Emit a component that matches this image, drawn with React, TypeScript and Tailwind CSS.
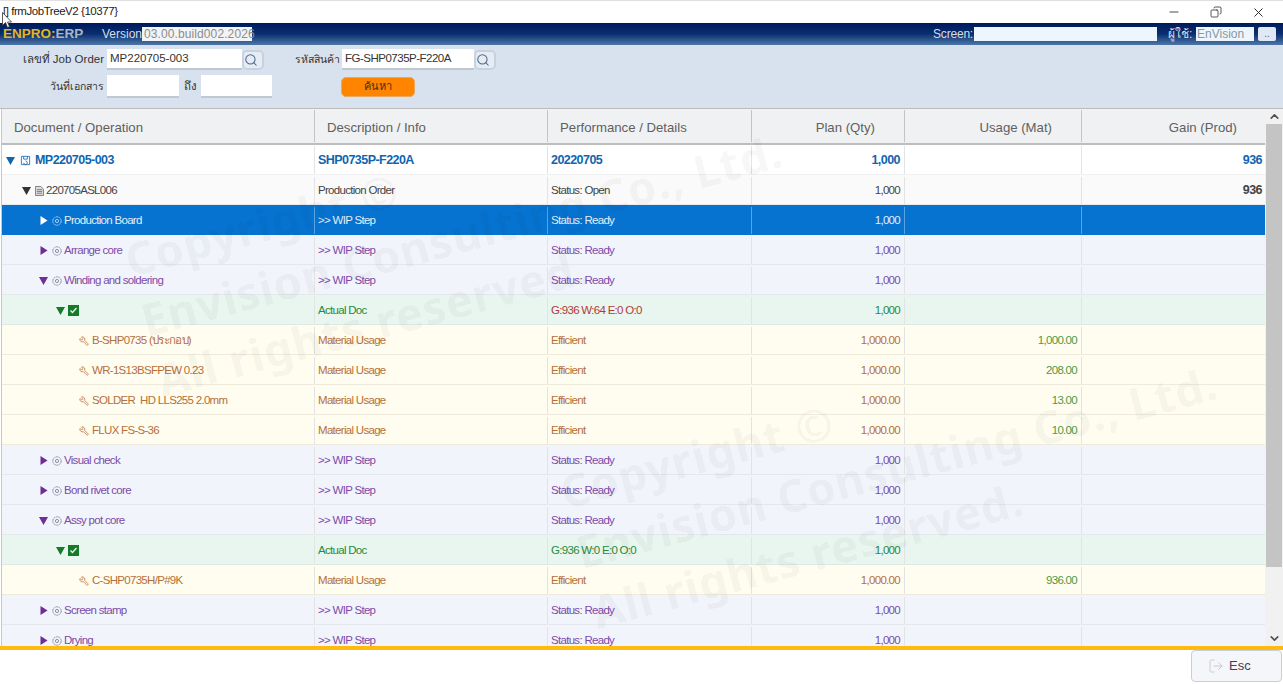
import { Copy, Minus, Search, Wrench, X, LogOut, ChevronUp, ChevronDown } from 'lucide-react'

const GRID = 'grid grid-cols-[313px_233px_204px_153px_177px_184px]'

type Kind = 'job' | 'order' | 'selected' | 'step' | 'doc' | 'material'

type Row = {
  kind: Kind
  name: string
  info: string
  detail: string
  plan: string
  usage?: string
  gain?: string
  open?: boolean
  detailRed?: boolean
}

const wip = (name: string, open = false): Row => ({
  kind: 'step',
  name,
  info: '>> WIP Step',
  detail: 'Status: Ready',
  plan: '1,000',
  open,
})

const mat = (name: string, usage: string): Row => ({
  kind: 'material',
  name,
  info: 'Material Usage',
  detail: 'Efficient',
  plan: '1,000.00',
  usage,
})

const ROWS: Row[] = [
  { kind: 'job', name: 'MP220705-003', info: 'SHP0735P-F220A', detail: '20220705', plan: '1,000', gain: '936', open: true },
  { kind: 'order', name: '220705ASL006', info: 'Production Order', detail: 'Status: Open', plan: '1,000', gain: '936', open: true },
  { ...wip('Production Board'), kind: 'selected' },
  wip('Arrange core'),
  wip('Winding and soldering', true),
  { kind: 'doc', name: '', info: 'Actual Doc', detail: 'G:936 W:64 E:0 O:0', plan: '1,000', open: true, detailRed: true },
  mat('B-SHP0735 (ประกอบ)', '1,000.00'),
  mat('WR-1S13BSFPEW 0.23', '208.00'),
  mat('SOLDER  HD LLS255 2.0mm', '13.00'),
  mat('FLUX FS-S-36', '10.00'),
  wip('Visual check'),
  wip('Bond rivet core'),
  wip('Assy pot core', true),
  { kind: 'doc', name: '', info: 'Actual Doc', detail: 'G:936 W:0 E:0 O:0', plan: '1,000', open: true },
  mat('C-SHP0735H/P#9K', '936.00'),
  wip('Screen stamp'),
  wip('Drying'),
]

const STYLES: Record<Kind, { row: string; text: string; indent: string; arrow: string; name: string; pad: string }> = {
  job: { row: 'bg-white border-[#f0f0f0]', text: 'text-[#0f66b0] font-bold', indent: 'pl-[4px] gap-[5px]', arrow: 'fill-[#0f66b0]', name: '-ml-[1px]', pad: 'pt-[1px]' },
  order: { row: 'bg-[#fafafa] border-[#ebebeb]', text: 'text-[#444444]', indent: 'pl-[20px] gap-[4px]', arrow: 'fill-[#333333]', name: '-ml-[2px]', pad: 'pt-[2px]' },
  selected: { row: 'bg-[#0673d0] border-[#0673d0]', text: 'text-[#e4effa]', indent: 'pl-[37px] gap-[4px]', arrow: 'fill-white', name: '-ml-[2px]', pad: 'pt-[2px]' },
  step: { row: 'bg-[#f1f4fb] border-[#e4e7ec]', text: 'text-[#7d4aa8]', indent: 'pl-[37px] gap-[4px]', arrow: 'fill-[#6b2f96]', name: '-ml-[2px]', pad: 'pt-[2px]' },
  doc: { row: 'bg-[#e8f6ef] border-[#dfe9e3]', text: 'text-[#268a3c]', indent: 'pl-[54px] gap-[3px]', arrow: 'fill-[#167a2c]', name: '', pad: 'pt-[2px]' },
  material: { row: 'bg-[#fffcf0] border-[#eeeadc]', text: 'text-[#b5703a]', indent: 'pl-[77px] gap-[4px]', arrow: '', name: '-ml-[1px]', pad: 'pt-[2px]' },
}

function Arrow({ open, className }: { open?: boolean; className: string }) {
  return (
    <svg width="9" height="9" viewBox="0 0 9 9" className={`shrink-0 ${className}`}>
      {open ? <path d="M0 1h9L4.5 9z" /> : <path d="M1.5 0l7 4.5-7 4.5z" />}
    </svg>
  )
}

function RowIcon({ kind }: { kind: Kind }) {
  if (kind === 'job') {
    return (
      <svg width="11" height="11" viewBox="0 0 12 12" fill="none" className="shrink-0 stroke-[#2a76b8]">
        <path d="M1.5 1.5h9v9h-9z" />
        <path d="M4 1.5v3h4v-3M6 6.5a2 2 0 1 1-2 2" />
      </svg>
    )
  }
  if (kind === 'order') {
    return (
      <svg width="9" height="10" viewBox="0 0 10 11" className="shrink-0">
        <path d="M.5.5h6l3 3v7h-9z" fill="#dddddd" stroke="#777777" />
        <path d="M2 4h6M2 6h6M2 8h6" stroke="#777777" />
      </svg>
    )
  }
  if (kind === 'doc') {
    return (
      <svg width="11" height="11" viewBox="0 0 11 11" className="shrink-0">
        <rect width="11" height="11" fill="#177a2a" />
        <path d="M2.500 5.500l2 2 4-4.500" fill="none" stroke="#e8f6ef" strokeWidth="1.3" />
      </svg>
    )
  }
  if (kind === 'material') {
    return <Wrench size={10} strokeWidth={2.4} className="shrink-0 -scale-x-100 text-[#c9926a]" />
  }
  return (
    <svg width="10" height="10" viewBox="0 0 10 10" fill="none" className="shrink-0">
      <circle cx="5" cy="5" r="4.2" stroke={kind === 'selected' ? '#a9cdf0' : '#8f8fa8'} strokeDasharray="2 .6" />
      <circle cx="5" cy="5" r="1.6" stroke={kind === 'selected' ? '#a9cdf0' : '#8f8fa8'} />
    </svg>
  )
}

function TreeRow({ row }: { row: Row }) {
  const s = STYLES[row.kind]
  const size = row.kind === 'job' ? 'text-[12.5px] tracking-[-0.55px]' : 'text-[11.5px] tracking-[-0.7px]'
  const divider = row.kind === 'selected' ? 'border-r border-[#5aa2e0]' : 'border-r border-[#e3e3e3]'
  const detailColor = row.detailRed ? 'text-[#b03a3a]' : s.text
  return (
    <div className={`${GRID} h-[30px] shrink-0 items-stretch border-b ${s.pad} ${s.row} ${size}`}>
      <div className={`flex items-center ${divider} ${s.indent} ${s.text}`}>
        {row.kind !== 'material' && <Arrow open={row.open} className={s.arrow} />}
        <RowIcon kind={row.kind} />
        {row.name && <span className={`whitespace-pre ${s.name}`}>{row.name}</span>}
      </div>
      <div className={`flex items-center pl-[3px] ${divider} ${s.text}`}>{row.info}</div>
      <div className={`flex items-center pl-[3px] ${divider} ${detailColor}`}>{row.detail}</div>
      <div className={`flex items-center justify-end pr-[4px] ${divider} ${s.text}`}>{row.plan}</div>
      <div className={`flex items-center justify-end pr-[4px] ${divider} text-[#4d9a45]`}>{row.usage}</div>
      <div className={`flex items-center justify-end pr-[4px] ${s.text} ${row.kind === 'order' ? 'text-[12.5px] font-bold tracking-[-0.55px]' : ''}`}>{row.gain}</div>
    </div>
  )
}

function Watermark({ className }: { className: string }) {
  return (
    <div className={`pointer-events-none absolute origin-top-left -rotate-[15deg] text-left font-['Noto_Sans',sans-serif] text-[45px] leading-[62px] font-bold tracking-[1px] whitespace-nowrap text-black/[0.05] ${className}`}>
      <div>Copyright ©</div>
      <div>Envision Consulting Co., Ltd.</div>
      <div>All rights reserved.</div>
    </div>
  )
}

function HeaderCell({ label, right, pr }: { label: string; right?: boolean; pr?: string }) {
  return (
    <div className={`my-[1px] flex items-center border-r border-[#c4c4c4] pt-[3px] ${right ? `justify-end ${pr}` : 'pl-[12px]'}`}>{label}</div>
  )
}

function SearchButton() {
  return (
    <button className="flex h-[20px] w-[22px] items-center justify-start rounded-[5px] border-2 border-[#c8d2de] bg-[#e6ecf4]">
      <Search size={14} strokeWidth={1.8} className="text-[#4a6a92]" />
    </button>
  )
}

export default function App() {
  return (
    <div className="relative flex h-[684px] w-[1283px] flex-col overflow-hidden bg-white font-['Liberation_Sans','Noto_Sans',sans-serif] text-[12px]">
      {/* title bar */}
      <div className="flex h-[23px] shrink-0 items-center justify-between border-t border-[#e0e0e0] bg-white pl-[3px] pr-[17px] text-[#222222]">
        <span className="text-[11.5px] tracking-[-0.45px]">[] frmJobTreeV2 {'{10377}'}</span>
        <div className="flex items-center gap-[29px] text-[#222222]">
          <Minus size={14} strokeWidth={1.4} />
          <Copy size={12} strokeWidth={1.5} className="-scale-x-100" />
          <X size={15} strokeWidth={1.5} />
        </div>
      </div>

      {/* app header */}
      <div className="flex h-[22px] shrink-0 items-center justify-between bg-gradient-to-b from-[#001a5c] via-[#0a2f70] to-[#4d77a8] pl-[3px] pr-[7px] text-[#d5deea]">
        <div className="flex items-center">
          <span className="w-[99px] text-[13.5px] font-bold">
            <span className="text-[#e6b422]">ENPRO:</span>
            <span className="text-[#a9b5c4]">ERP</span>
          </span>
          <span>Version</span>
          <span className="flex h-[14px] w-[110px] items-center bg-[#f3f4f6] pl-[2px] tracking-[0.1px] text-[#8c8c8c]">03.00.build002.2026</span>
        </div>
        <div className="flex items-center">
          <span className="tracking-[-0.2px]">Screen:</span>
          <span className="ml-[1px] mr-[11px] h-[14px] w-[183px] bg-[#eef6fd]" />
          <span className="mr-[1px] w-[27px]">ผู้ใช้:</span>
          <span className="mr-[4px] flex h-[14px] w-[58px] items-center bg-[#eef6fd] pl-[1px] text-[#8c96a2]">EnVision</span>
          <span className="flex h-[14px] w-[18px] items-center justify-center rounded-[2px] bg-[#dfe8f4] text-[10px] leading-none text-[#666666]">..</span>
        </div>
      </div>

      {/* filters */}
      <div className="flex h-[63px] shrink-0 flex-col gap-[5px] bg-[#d8e2ee] pt-[4px] text-[11.5px] text-[#333333]">
        <div className="flex h-[21px] items-center">
          <span className="mr-[3px] w-[104px] pt-[1px] text-right text-[11.5px]">เลขที่ Job Order</span>
          <span className="flex h-[21px] w-[135px] items-center border-b-2 border-[#c0c8d2] bg-white pl-[3px] pt-[1px]">MP220705-003</span>
          <SearchButton />
          <span className="ml-[31px] mr-[3px] w-[44px] whitespace-nowrap pt-[1px] text-[10.5px]">รหัสสินค้า</span>
          <span className="flex h-[21px] w-[132px] items-center border-b-2 border-[#c0c8d2] bg-white pl-[3px] pt-[1px] tracking-[-0.5px]">FG-SHP0735P-F220A</span>
          <SearchButton />
        </div>
        <div className="flex h-[23px] items-center">
          <span className="mr-[3px] w-[104px] text-right text-[10.5px]">วันที่เอกสาร</span>
          <span className="h-[23px] w-[72px] border-b-2 border-[#c0c8d2] bg-white" />
          <span className="w-[22px] text-center">ถึง</span>
          <span className="h-[23px] w-[71px] border-b-2 border-[#c0c8d2] bg-white" />
          <button className="ml-[69px] flex h-[20px] w-[74px] items-center justify-center rounded-[5px] border border-[#e8a860] bg-[#ff8400] text-[11px] text-[#4a3010]">ค้นหา</button>
        </div>
      </div>

      {/* tree table */}
      <div className="relative flex min-h-0 flex-1 overflow-hidden border-t border-[#bcbcbc] bg-white pl-[1px]">
        <div className="flex w-[1264px] flex-col overflow-hidden border-l border-[#c8c8c8]">
          <div className={`${GRID} h-[36px] shrink-0 border-b-2 border-[#bdbdbd] bg-[#f0f1f3] text-[13.2px] text-[#606060]`}>
            <HeaderCell label="Document / Operation" />
            <HeaderCell label="Description / Info" />
            <HeaderCell label="Performance / Details" />
            <HeaderCell label="Plan (Qty)" right pr="pr-[29px]" />
            <HeaderCell label="Usage (Mat)" right pr="pr-[29px]" />
            <div className="flex items-center justify-end pt-[3px] pr-[29px]">Gain (Prod)</div>
          </div>
          {ROWS.map((row, i) => (
            <TreeRow key={i} row={row} />
          ))}
        </div>
        <div className="flex w-[18px] shrink-0 flex-col items-center bg-[#f1f1f1] text-[#505050]">
          <ChevronUp size={13} strokeWidth={3} className="my-[1px]" />
          <div className="h-[443px] w-[16px] bg-[#c4c4c4]" />
          <div className="flex-1" />
          <ChevronDown size={13} strokeWidth={3} className="my-[1px]" />
        </div>
        <Watermark className="left-[118px] top-[122px]" />
        <Watermark className="left-[553px] top-[354px]" />
      </div>

      {/* footer */}
      <div className="h-[4px] shrink-0 bg-[#ffb90f]" />
      <div className="flex h-[34px] shrink-0 items-start justify-end bg-white pr-[1px]">
        <button className="flex h-[32px] w-[91px] items-center justify-start gap-[5px] rounded-[4px] border border-[#c6d0dc] bg-[#f4f6f9] pl-[16px] text-[13px] text-[#4a3a60]">
          <LogOut size={16} strokeWidth={1.4} className="text-[#c4c8cc]" />
          Esc
        </button>
      </div>

      {/* mouse pointer caught in the shot */}
      <svg width="10" height="17" viewBox="0 0 10 17" className="absolute left-[2px] top-[12px]">
        <path d="M.5.5v13l3-3 2 5 2-1-2-4.500h4z" fill="#ffffff" stroke="#333333" strokeWidth="0.8" />
      </svg>
    </div>
  )
}
